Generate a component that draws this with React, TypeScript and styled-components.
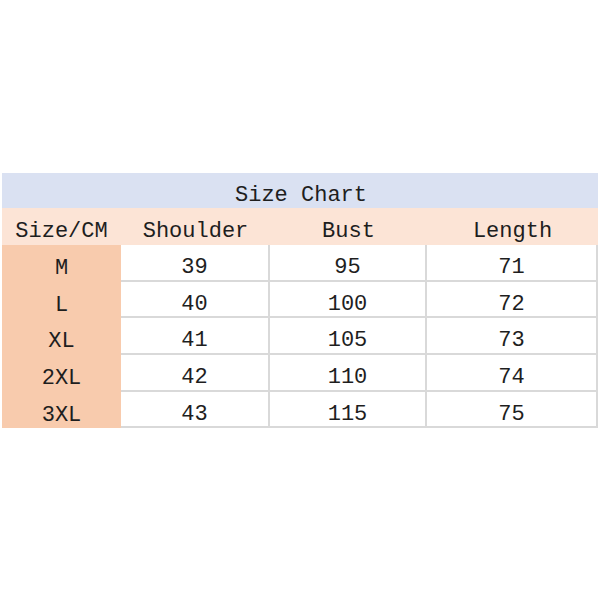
import React from "react";
import styled, { createGlobalStyle } from "styled-components";

const Global = createGlobalStyle`
  html, body { margin: 0; padding: 0; background: #ffffff; }
  body { font-family: "Liberation Mono", "DejaVu Sans Mono", monospace; }
`;

const Page = styled.div`
  width: 600px;
  height: 600px;
  padding: 173px 2px 0 2px;
  box-sizing: border-box;
`;

const Table = styled.div`
  display: grid;
  grid-template-columns: 119px 149px 157px 171px;
  width: 596px;
  font-size: 22px;
  color: #1e1e1e;
`;

const Title = styled.div`
  grid-column: 1 / -1;
  height: 35px;
  background: #dae1f2;
  display: flex;
  align-items: center;
  justify-content: center;
  padding: 10px 0 0 2px;
  box-sizing: border-box;
`;

const Head = styled.div`
  height: 37px;
  background: #fce4d6;
  display: flex;
  align-items: center;
  justify-content: center;
  padding-top: 10px;
  box-sizing: border-box;
`;

const SizeCell = styled.div<{ $h: number }>`
  height: ${(p) => p.$h}px;
  background: #f8cbad;
  display: flex;
  align-items: center;
  justify-content: center;
  padding-top: 10px;
  box-sizing: border-box;
`;

const Cell = styled.div<{ $h: number }>`
  height: ${(p) => p.$h}px;
  background: #ffffff;
  border-right: 2px solid #d9d9d9;
  border-bottom: 2px solid #d9d9d9;
  display: flex;
  align-items: center;
  justify-content: center;
  padding-top: 10px;
  box-sizing: border-box;
`;

const rows = [
  { s: "M", v: ["39", "95", "71"], h: 37 },
  { s: "L", v: ["40", "100", "72"], h: 36 },
  { s: "XL", v: ["41", "105", "73"], h: 37 },
  { s: "2XL", v: ["42", "110", "74"], h: 37 },
  { s: "3XL", v: ["43", "115", "75"], h: 36 },
];

export default function App() {
  return (
    <Page>
      <Global />
      <Table>
        <Title>Size Chart</Title>
        <Head>Size/CM</Head>
        <Head>Shoulder</Head>
        <Head>Bust</Head>
        <Head>Length</Head>
        {rows.map((r) => (
          <React.Fragment key={r.s}>
            <SizeCell $h={r.h}>{r.s}</SizeCell>
            {r.v.map((v, i) => (
              <Cell key={i} $h={r.h}>
                {v}
              </Cell>
            ))}
          </React.Fragment>
        ))}
      </Table>
    </Page>
  );
}
